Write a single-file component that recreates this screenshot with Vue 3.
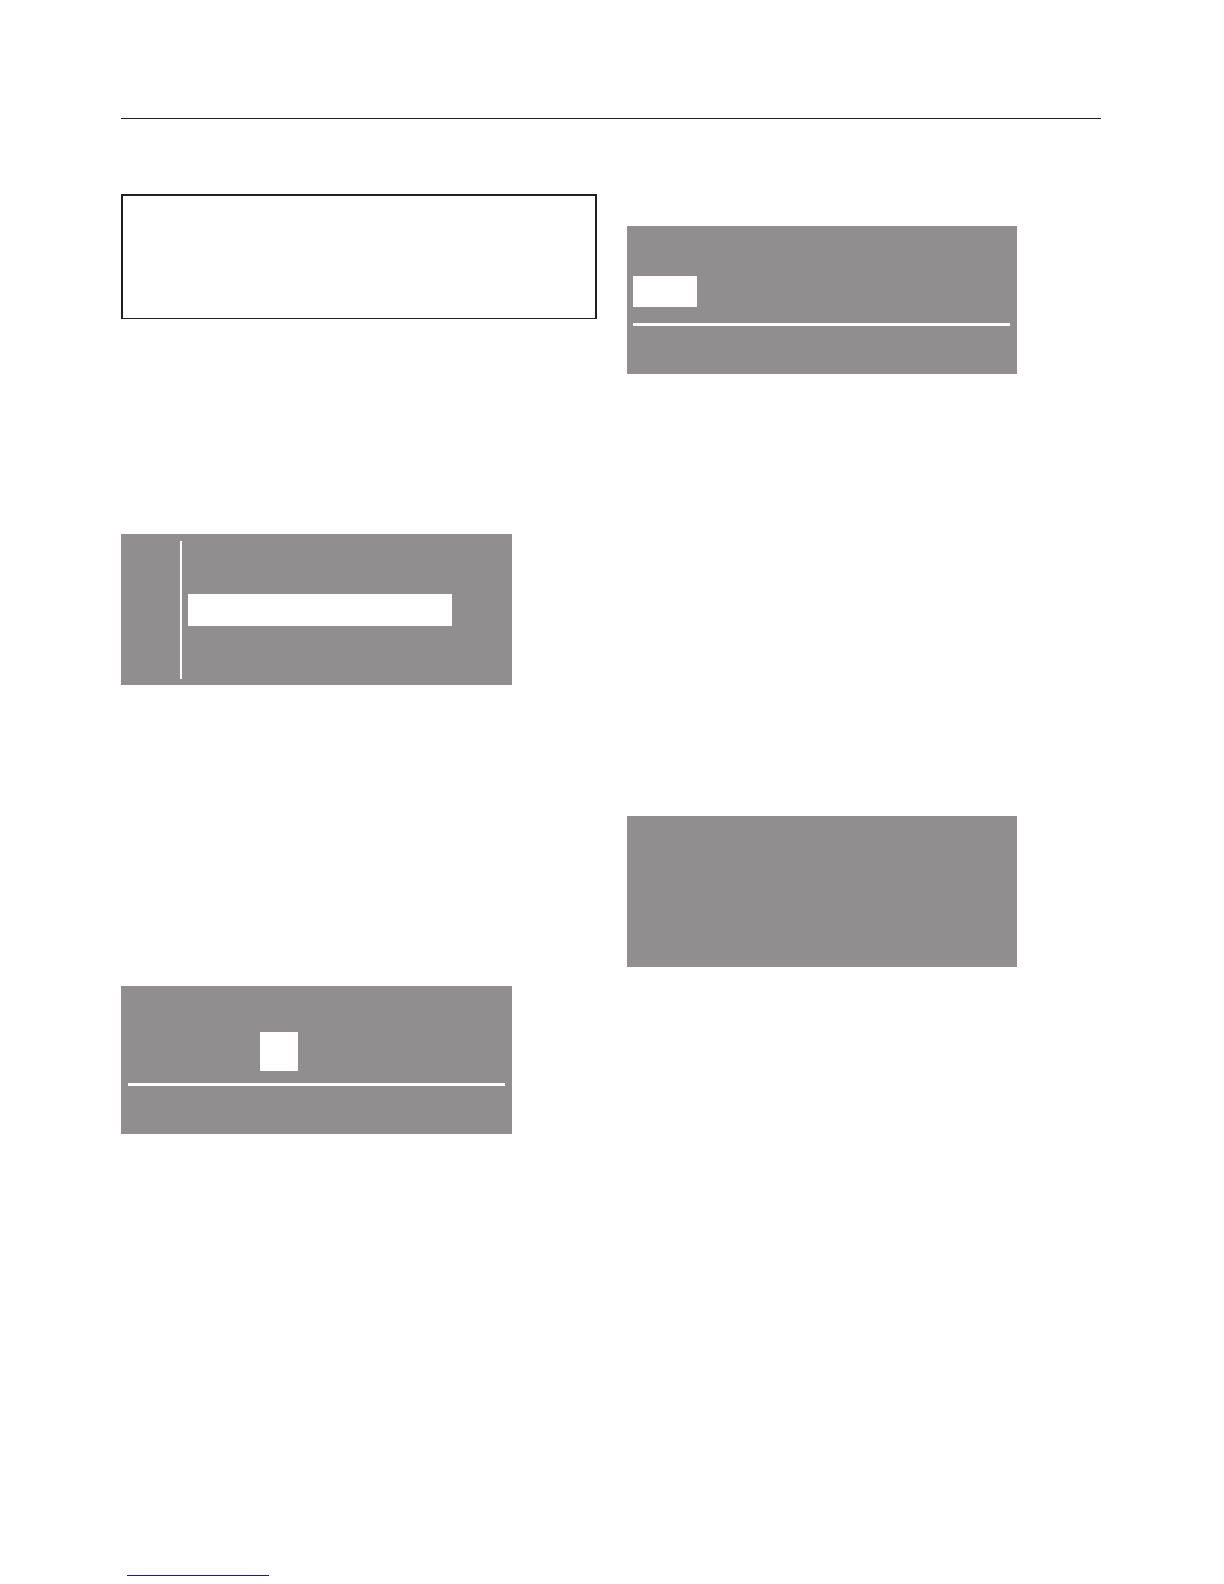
<script setup>
</script>

<template>
<div class="page">
  <header class="page-header"></header>
  <main class="columns">
    <section class="column">
      <div class="note"></div>
      <div class="display menu">
        <div class="menu-side"></div>
        <div class="menu-list">
          <div class="highlight menu-item"></div>
        </div>
      </div>
      <div class="display setting digit">
        <div class="highlight digit-value"></div>
        <hr class="divider">
      </div>
    </section>
    <section class="column column-right">
      <div class="display setting">
        <div class="highlight setting-value"></div>
        <hr class="divider">
      </div>
      <div class="display blank"></div>
    </section>
  </main>
  <footer class="page-footer">
    <a class="footer-link" href="#" aria-label="Contents"></a>
  </footer>
</div>
</template>

<style>
body {
  margin: 0;
  background: #fff;
}
</style>

<style scoped>
.page {
  box-sizing: border-box;
  min-height: 100vh;
  padding: 118px 123px 8px 121px;
  display: flex;
  flex-direction: column;
  font-family: "Liberation Sans", Arial, sans-serif;
}
.page-header {
  border-top: 1px solid #231f20;
}
.columns {
  display: grid;
  grid-template-columns: 476fr 474fr;
  column-gap: 30px;
  padding-top: 75px;
}
.column-right {
  padding-top: 32px;
}
.note {
  box-sizing: border-box;
  height: 125px;
  border: 2px solid #231f20;
  border-bottom-width: 1px;
}
.display {
  box-sizing: border-box;
  width: 82.2%;
  background: #908e8f;
}
.highlight {
  background: #fff;
}
/* menu list with the selected row */
.menu {
  display: flex;
  height: 151px;
  margin-top: 215px;
  padding: 7px 60px 6px 0;
}
.menu-side {
  width: 59px;
  border-right: 2px solid #fff;
}
.menu-list {
  flex: 1;
  padding: 53px 0 0 6px;
}
.menu-item {
  height: 32px;
}
/* value above a line */
.setting {
  display: flex;
  flex-direction: column;
  height: 148px;
  padding: 50px 7px 0 6px;
}
.setting-value {
  width: 64px;
  height: 31px;
}
.divider {
  width: 100%;
  height: 3px;
  margin: 16px 0 0;
  border: 0;
  background: #fff;
}
.digit {
  margin-top: 301px;
  padding: 46px 7px 0;
}
.digit-value {
  width: 38px;
  height: 39px;
  margin-left: 132px;
}
.digit .divider {
  margin-top: 12px;
}
.blank {
  height: 151px;
  margin-top: 442px;
}
.page-footer {
  margin-top: auto;
  padding-left: 6px;
}
.footer-link {
  display: block;
  width: 142px;
  height: 1px;
  background: #1a1a96;
}
</style>
